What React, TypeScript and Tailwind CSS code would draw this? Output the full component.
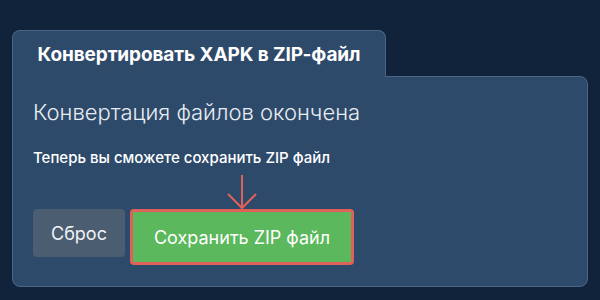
export default function App() {
  return (
    <div className="h-[300px] w-[600px] bg-[#10233a] px-3 pt-[30px] font-['Inter',sans-serif]">
      <div className="flex flex-col">
        <div className="relative z-10 -mb-px flex h-[47px] w-[374px] items-center justify-center rounded-t-lg border-x border-t border-[#4a6586] bg-[#2e4a6a] pt-[3px]">
          <h1 className="text-[19px] font-bold tracking-[-0.1px] text-white">
            Конвертировать XAPK в ZIP-файл
          </h1>
        </div>
        <div className="h-[211px] rounded-tr-lg rounded-b-lg border border-[#4a6586] bg-[#2e4a6a] px-5 pt-[21px]">
          <h2 className="text-[22px] font-light leading-[28px] text-[#e8edf2]">
            Конвертация файлов окончена
          </h2>
          <p className="mt-[22px] text-[15px] font-medium leading-[20px] text-white">
            Теперь вы сможете сохранить ZIP файл
          </p>
          <div className="mt-[41px] flex items-start gap-[5px]">
            <button className="flex h-12 w-[92px] items-center justify-center rounded bg-[#4b5d70] text-[18px] text-[#f0f3f6]">
              Сброс
            </button>
            <div className="relative rounded border-[3px] border-[#e0605a]">
              <svg
                className="absolute -top-[38px] left-1/2 -translate-x-1/2"
                width="32"
                height="36"
                viewBox="0 0 32 36"
                fill="none"
                stroke="#e0605a"
                strokeWidth="2"
              >
                <path d="M16 1 V34" />
                <path d="M2 20 L16 34 L30 20" />
              </svg>
              <button className="flex h-[50px] w-[218px] items-center justify-center bg-[#5cb85c] text-[18px] text-white">
                Сохранить ZIP файл
              </button>
            </div>
          </div>
        </div>
      </div>
    </div>
  );
}
